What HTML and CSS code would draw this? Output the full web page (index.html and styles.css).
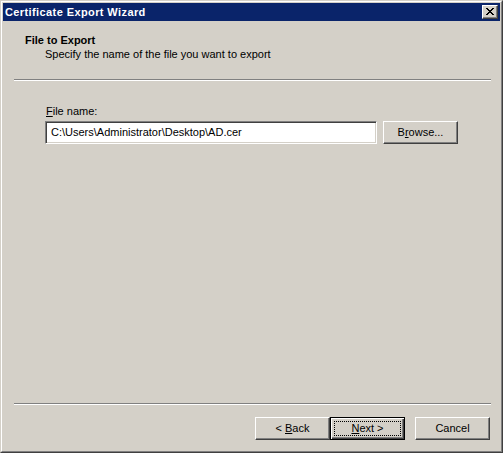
FILE: index.html
```html
<!DOCTYPE html>
<html>
<head>
<meta charset="utf-8">
<link rel="stylesheet" href="styles.css">
</head>
<body>
<div class="window">
  <div class="frame">
    <div class="titlebar">
      <span class="title">Certificate Export Wizard</span>
      <button class="close" aria-label="Close">
        <svg width="8" height="7" viewBox="0 0 8 7">
          <path d="M0 0h2v1h1v1h2v-1h1v-1h2v1h-1v1h-1v1h-1v1h1v1h1v1h1v1h-2v-1h-1v-1h-2v1h-1v1h-2v-1h1v-1h1v-1h1v-1h-1v-1h-1v-1h-1z" fill="#000"/>
        </svg>
      </button>
    </div>
    <div class="client">
      <div class="header">
        <div class="h-title">File to Export</div>
        <div class="h-sub">Specify the name of the file you want to export</div>
      </div>
      <div class="sep"></div>
      <div class="content">
        <div class="label"><u>F</u>ile name:</div>
        <div class="row">
          <div class="input">C:\Users\Administrator\Desktop\AD.cer</div>
          <button class="btn">B<u>r</u>owse...</button>
        </div>
      </div>
      <div class="sep"></div>
      <div class="footer">
        <button class="btn">&lt; <u>B</u>ack</button>
        <button class="btn default"><span class="focus"><u>N</u>ext &gt;</span></button>
        <button class="btn cancel">Cancel</button>
      </div>
    </div>
  </div>
</div>
</body>
</html>
```
FILE: styles.css
```css
* { box-sizing: border-box; }
html, body { margin: 0; padding: 0; background: #d4d0c8; }
body {
  font-family: "Liberation Sans", Arial, sans-serif;
  font-size: 11px;
  color: #000;
}
.window {
  width: 503px;
  height: 453px;
  border: 1px solid;
  border-color: #d4d0c8 #404040 #404040 #d4d0c8;
  background: #d4d0c8;
}
.frame {
  height: 100%;
  border: 1px solid;
  border-color: #fff #808080 #808080 #fff;
  padding: 1px;
  display: flex;
  flex-direction: column;
}
.titlebar {
  height: 18px;
  background: #0a246a;
  display: flex;
  align-items: center;
  justify-content: space-between;
  padding: 0 2px 0 2px;
}
.title {
  color: #fff;
  font-weight: bold;
  font-size: 11px;
  line-height: 13px;
  letter-spacing: 0.4px;
}
.close {
  width: 16px;
  height: 14px;
  padding: 0;
  margin: 0;
  background: #d4d0c8;
  border: 1px solid;
  border-color: #fff #404040 #404040 #fff;
  box-shadow: inset -1px -1px #808080;
  display: flex;
  align-items: center;
  justify-content: center;
}
.close svg { display: block; margin-left: -1px; margin-top: -1px; }
.client {
  flex: 1;
  display: flex;
  flex-direction: column;
}
.header {
  height: 58px;
  padding: 12px 0 0 22px;
  line-height: 14px;
}
.h-title { font-weight: bold; height: 14px; }
.h-sub { padding-left: 20px; }
.sep {
  height: 2px;
  margin: 0 9px 0 11px;
  border-top: 1px solid #808080;
  border-bottom: 1px solid #fff;
}
.content {
  height: 322px;
  padding: 24px 0 0 42px;
}
.label {
  line-height: 13px;
  padding-left: 1px;
  margin-bottom: 3px;
}
.row {
  display: flex;
  gap: 6px;
}
.input {
  width: 332px;
  height: 23px;
  background: #fff;
  border: 1px solid;
  border-color: #808080 #fff #fff #808080;
  box-shadow: inset 1px 1px #404040, inset -1px -1px #d4d0c8;
  padding: 0 4px 0 5px;
  line-height: 21px;
  white-space: nowrap;
}
.btn {
  width: 75px;
  height: 23px;
  margin: 0;
  padding: 0;
  font-family: inherit;
  font-size: 11px;
  color: #000;
  background: #d4d0c8;
  border: 1px solid;
  border-color: #fff #404040 #404040 #fff;
  box-shadow: inset -1px -1px #808080;
  text-align: center;
  line-height: 19px;
}
.footer {
  flex: 1;
  display: flex;
  justify-content: flex-end;
  padding: 12px 10px 0 0;
}
.default {
  position: relative;
  border: 1px solid #000;
  box-shadow: inset 1px 1px #fff, inset -1px -1px #404040, inset -2px -2px #808080;
}
.focus {
  position: absolute;
  inset: 3px;
  border: 1px dotted #000;
  line-height: 13px;
  display: flex;
  align-items: center;
  justify-content: center;
}
.cancel { margin-left: 10px; }
```
